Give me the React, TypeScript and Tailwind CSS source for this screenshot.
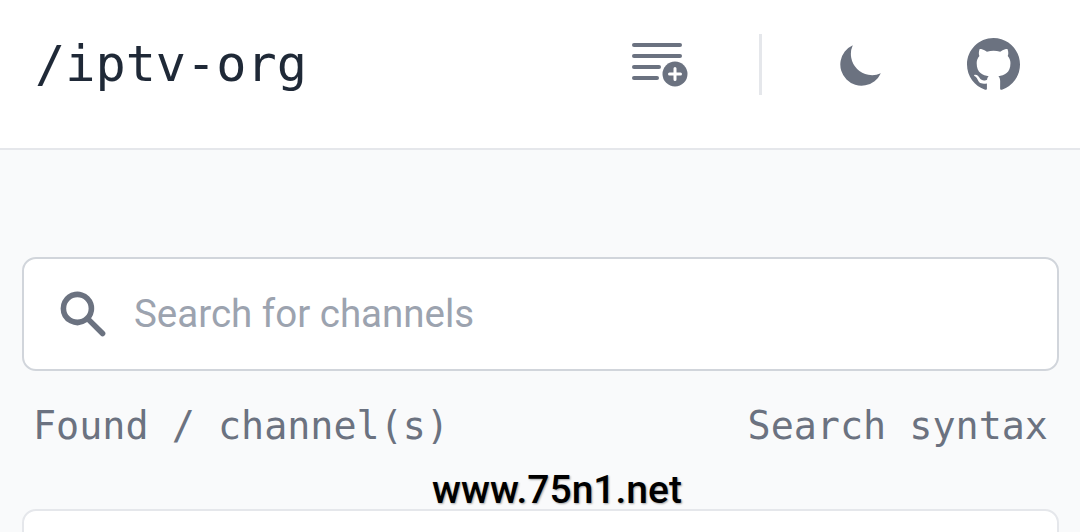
export default function App() {
  return (
    <div className="relative h-[532px] w-[1080px] overflow-hidden bg-[#f9fafb]">
      <header className="flex h-[150px] items-center border-b-2 border-[#e5e7eb] bg-white pb-[20px] pl-[35px]">
        <span className="font-['DejaVu_Sans_Mono',monospace] text-[50.2px] leading-none text-[#1f2937]">/iptv-org</span>
        <div className="ml-auto flex items-center">
          <svg className="h-[46px] w-[56px] text-[#6b7280]" viewBox="0 0 56 46" fill="currentColor">
            <rect x="0" y="2" width="50" height="4" rx="2" />
            <rect x="0" y="13" width="50" height="4" rx="2" />
            <rect x="0" y="24" width="29" height="4" rx="2" />
            <rect x="0" y="35" width="27" height="4" rx="2" />
            <circle cx="43" cy="33" r="12.5" />
            <path d="M43 27.5v11M37.5 33h11" stroke="white" strokeWidth="3" strokeLinecap="round" />
          </svg>
          <div className="ml-[71px] h-[61px] w-[3px] bg-[#e5e7eb]" />
          <svg className="ml-[73px] h-[53px] w-[53px] text-[#6b7280]" viewBox="0 0 20 20" fill="currentColor">
            <path d="M17.293 13.293A8 8 0 016.707 2.707a8.001 8.001 0 1010.586 10.586z" />
          </svg>
          <svg className="ml-[79px] mr-[60px] h-[53px] w-[53px] text-[#6b7280]" viewBox="0 0 16 16" fill="currentColor">
            <path d="M8 0C3.58 0 0 3.58 0 8c0 3.54 2.29 6.53 5.47 7.59.4.07.55-.17.55-.38 0-.19-.01-.82-.01-1.49-2.01.37-2.53-.49-2.69-.94-.09-.23-.48-.94-.82-1.13-.28-.15-.68-.52-.01-.53.63-.01 1.08.58 1.23.82.72 1.21 1.87.87 2.33.66.07-.52.28-.87.51-1.07-1.78-.2-3.64-.89-3.64-3.95 0-.87.31-1.59.82-2.15-.08-.2-.36-1.02.08-2.12 0 0 .67-.21 2.2.82.64-.18 1.32-.27 2-.27.68 0 1.36.09 2 .27 1.53-1.04 2.2-.82 2.2-.82.44 1.1.16 1.92.08 2.12.51.56.82 1.27.82 2.15 0 3.07-1.87 3.75-3.65 3.95.29.25.54.73.54 1.48 0 1.07-.01 1.93-.01 2.2 0 .21.15.46.55.38A8.013 8.013 0 0016 8c0-4.42-3.58-8-8-8z" />
          </svg>
        </div>
      </header>
      <main className="pl-[22px] pr-[21px] pt-[107px]">
        <div className="flex h-[114px] items-center rounded-[14px] border-2 border-[#d1d5db] bg-white pl-[31px]">
          <svg className="h-[56px] w-[56px] text-[#6b7280]" viewBox="0 0 20 20" fill="currentColor">
            <path fillRule="evenodd" clipRule="evenodd" d="M8 4a4 4 0 100 8 4 4 0 000-8zM2 8a6 6 0 1110.89 3.476l4.817 4.817a1 1 0 01-1.414 1.414l-4.816-4.816A6 6 0 012 8z" />
          </svg>
          <span className="ml-[23px] font-['Roboto',sans-serif] text-[38.5px] leading-none text-[#9ca3af]">Search for channels</span>
        </div>
        <div className="mt-[33px] flex items-center justify-between pl-[11px] pr-[11px] font-['DejaVu_Sans_Mono',monospace] text-[38.4px] leading-[44px] text-[#6b7280]">
          <span>Found / channel(s)</span>
          <span>Search syntax</span>
        </div>
        <div className="mt-[61px] h-[80px] rounded-[14px] border-2 border-[#e5e7eb] bg-white" />
      </main>
      <div className="absolute left-[432px] top-[468px] font-['Roboto',sans-serif] text-[39px] leading-[44px] font-medium text-black [text-shadow:1px_1px_2px_rgba(0,0,0,0.35)]">www.75n1.net</div>
    </div>
  );
}
